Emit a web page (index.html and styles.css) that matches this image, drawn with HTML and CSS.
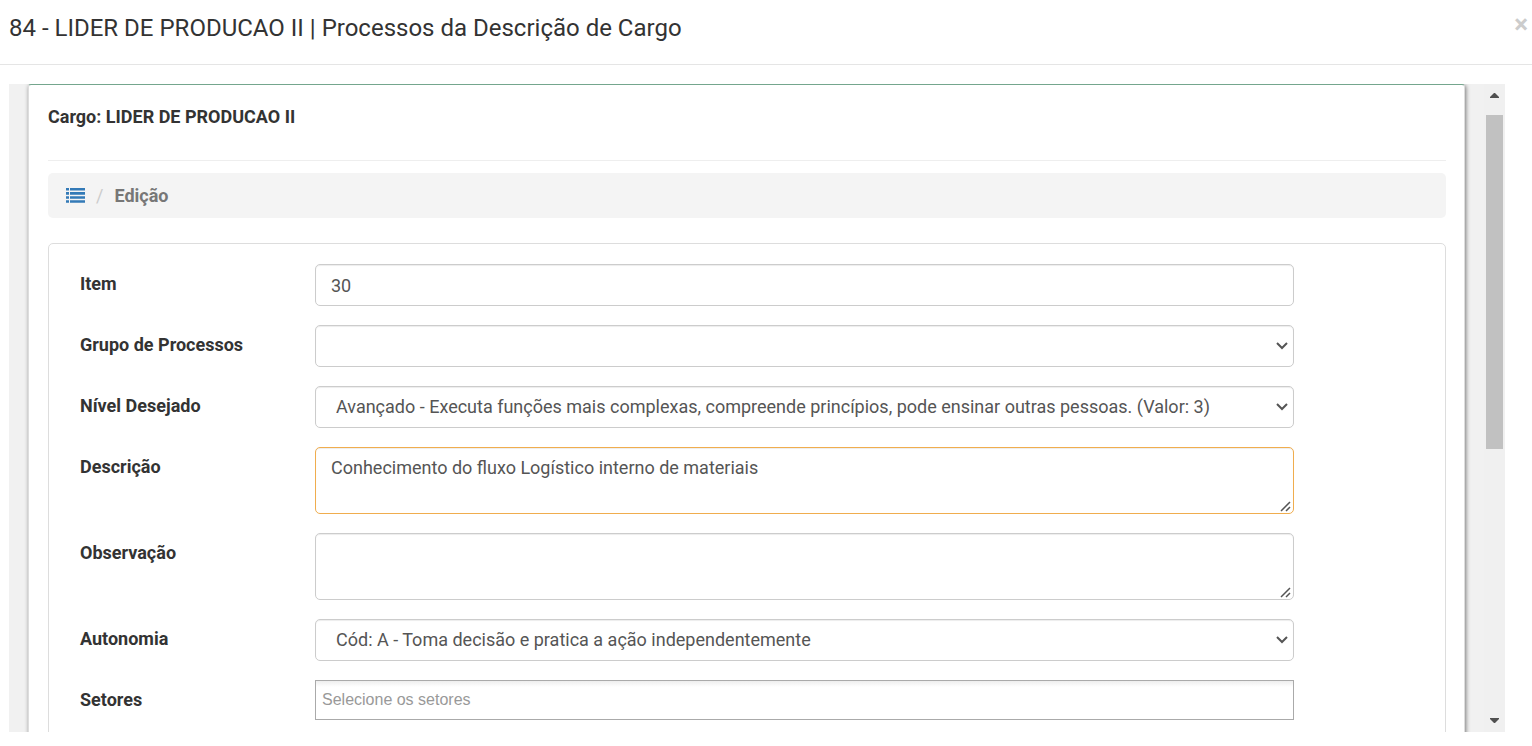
FILE: index.html
```html
<!DOCTYPE html>
<html lang="pt-BR">
<head>
<meta charset="utf-8">
<meta name="viewport" content="width=device-width, initial-scale=1">
<title>Processos da Descrição de Cargo</title>
<link rel="stylesheet" href="styles.css">
</head>
<body>
<div class="modal">
  <header class="modal-header">
    <h1 class="modal-title">84 - LIDER DE PRODUCAO II | Processos da Descrição de Cargo</h1>
    <button class="close" type="button" aria-label="Fechar">×</button>
  </header>
  <div class="modal-body">
    <div class="frame">
      <main class="viewport">
        <section class="panel">
          <h2 class="panel-title">Cargo: LIDER DE PRODUCAO II</h2>
          <nav class="breadcrumb" aria-label="Navegação">
            <a class="breadcrumb-link" href="#" aria-label="Lista">
              <svg class="list-icon" width="19" height="15" viewBox="0 0 19 15" aria-hidden="true" fill="currentColor">
                <path d="M0 0h3v2.6H0zM4 0h15v2.6H4zM0 4.1h3v2.6H0zM4 4.1h15v2.6H4zM0 8.2h3v2.6H0zM4 8.2h15v2.6H4zM0 12.3h3v2.4H0zM4 12.3h15v2.4H4z"/>
              </svg>
            </a>
            <span class="breadcrumb-sep" aria-hidden="true">/</span>
            <span class="breadcrumb-current">Edição</span>
          </nav>
          <form class="form">
            <div class="row">
              <label class="label" for="item">Item</label>
              <input class="control" id="item" type="text" value="30">
            </div>
            <div class="row">
              <label class="label" for="grupo">Grupo de Processos</label>
              <select class="control" id="grupo"><option></option></select>
            </div>
            <div class="row">
              <label class="label" for="nivel">Nível Desejado</label>
              <select class="control" id="nivel"><option>Avançado - Executa funções mais complexas, compreende princípios, pode ensinar outras pessoas. (Valor: 3)</option></select>
            </div>
            <div class="row">
              <label class="label" for="descricao">Descrição</label>
              <textarea class="control area changed" id="descricao">Conhecimento do fluxo Logístico interno de materiais</textarea>
            </div>
            <div class="row">
              <label class="label" for="observacao">Observação</label>
              <textarea class="control area" id="observacao"></textarea>
            </div>
            <div class="row">
              <label class="label" for="autonomia">Autonomia</label>
              <select class="control" id="autonomia"><option>Cód: A - Toma decisão e pratica a ação independentemente</option></select>
            </div>
            <div class="row">
              <label class="label" for="setores">Setores</label>
              <input class="chosen" id="setores" type="text" placeholder="Selecione os setores">
            </div>
          </form>
        </section>
      </main>
      <div class="scrollbar" aria-hidden="true">
        <svg class="arrow" width="9" height="5" viewBox="0 0 9 5"><path d="M4 0h1l4 4v1H0V4z"/></svg>
        <div class="track"><div class="thumb"></div></div>
        <svg class="arrow" width="9" height="5" viewBox="0 0 9 5"><path d="M0 0h9v1L5 5H4L0 1z"/></svg>
      </div>
    </div>
  </div>
</div>
</body>
</html>
```
FILE: styles.css
```css
* { box-sizing: border-box; }

body {
  margin: 0;
  background: #fff;
  color: #333;
  font-family: Roboto, "Liberation Sans", sans-serif;
  font-size: 18px;
  line-height: 26px;
}

.modal {
  display: flex;
  flex-direction: column;
  height: 100vh;
}

.modal-header {
  display: flex;
  justify-content: space-between;
  align-items: flex-start;
  padding: 12px 4px 20px 9px;
  border-bottom: 1px solid #e5e5e5;
}

.modal-title {
  margin: 0;
  font-size: 24px;
  font-weight: 400;
  line-height: 32px;
}

.close {
  padding: 0;
  border: 0;
  background: none;
  color: #ccc;
  font: bold 26px/24px Roboto, sans-serif;
}

.modal-body {
  flex: 1;
  min-height: 0;
  padding: 19px 27px 14px 9px;
}

.frame {
  display: flex;
  height: 100%;
  overflow: hidden;
  background: #f1f1f1;
}

.viewport {
  flex: 1;
  min-width: 0;
  padding: 0 19px;
  overflow: hidden;
}

.panel {
  min-height: 900px;
  padding: 0 18px 0 19px;
  border: 1px solid #ddd;
  border-top-color: #74a68d;
  border-radius: 3px;
  background: #fff;
  box-shadow: 1px 1px 4px rgba(0, 0, 0, 0.5);
}

.panel-title {
  margin: 0 0 12px;
  padding: 19px 0 30px;
  border-bottom: 1px solid #eee;
  font-size: 18px;
  font-weight: 700;
  line-height: 26px;
}

.breadcrumb {
  display: flex;
  align-items: center;
  height: 45px;
  margin-bottom: 25px;
  padding: 0 18px;
  border-radius: 5px;
  background: #f4f4f4;
}

.breadcrumb-link { color: #337ab7; }

.list-icon { display: block; }

.breadcrumb-sep {
  padding: 0 11px;
  color: #ccc;
}

.breadcrumb-current {
  color: #777;
  font-weight: 700;
}

.form {
  display: flex;
  flex-direction: column;
  gap: 19px;
  min-height: 600px;
  padding: 20px 151px 19px 31px;
  border: 1px solid #ddd;
  border-radius: 5px;
}

.row {
  display: grid;
  grid-template-columns: 235px 1fr;
  align-items: start;
}

.label {
  padding-top: 7px;
  font-weight: 700;
}

.control {
  display: block;
  width: 100%;
  height: 42px;
  margin: 0;
  padding: 7px 15px;
  border: 1px solid #ccc;
  border-radius: 5px;
  background-color: #fff;
  box-shadow: inset 0 1px 1px rgba(0, 0, 0, 0.075);
  color: #555;
  font: 18px/26px Roboto, "Liberation Sans", sans-serif;
}

select.control {
  padding: 0 20px;
  appearance: none;
  background-image: url("data:image/svg+xml,%3Csvg xmlns='http://www.w3.org/2000/svg' width='12' height='8' viewBox='0 0 12 8'%3E%3Cpath d='M1 1l5 5 5-5' fill='none' stroke='%23555' stroke-width='2'/%3E%3C/svg%3E");
  background-repeat: no-repeat;
  background-position: right 5px center;
}

.area {
  height: 67px;
  resize: vertical;
}

.area::-webkit-resizer {
  background: url("data:image/svg+xml,%3Csvg xmlns='http://www.w3.org/2000/svg' width='15' height='15' viewBox='0 0 15 15'%3E%3Cpath d='M3 13l9-9M8 13l4-4' fill='none' stroke='%23555' stroke-width='1.5'/%3E%3C/svg%3E") no-repeat right bottom;
}

.changed { border-color: #f0ad4e; }

.chosen {
  width: 100%;
  height: 40px;
  padding: 0 6px;
  border: 1px solid #aaa;
  background: linear-gradient(#eee, #fff 6px);
  color: #555;
  font: 16px/20px "Liberation Sans", Arial, sans-serif;
}

.chosen::placeholder {
  color: #999;
  opacity: 1;
}

.scrollbar {
  display: flex;
  flex-direction: column;
  align-items: center;
  width: 21px;
  padding: 9px 2px;
  background: #f0f0f0;
}

.arrow {
  display: block;
  fill: #505050;
}

.track {
  flex: 1;
  align-self: stretch;
  padding: 17px 0;
}

.thumb {
  height: 57%;
  background: #c1c1c1;
}
```
